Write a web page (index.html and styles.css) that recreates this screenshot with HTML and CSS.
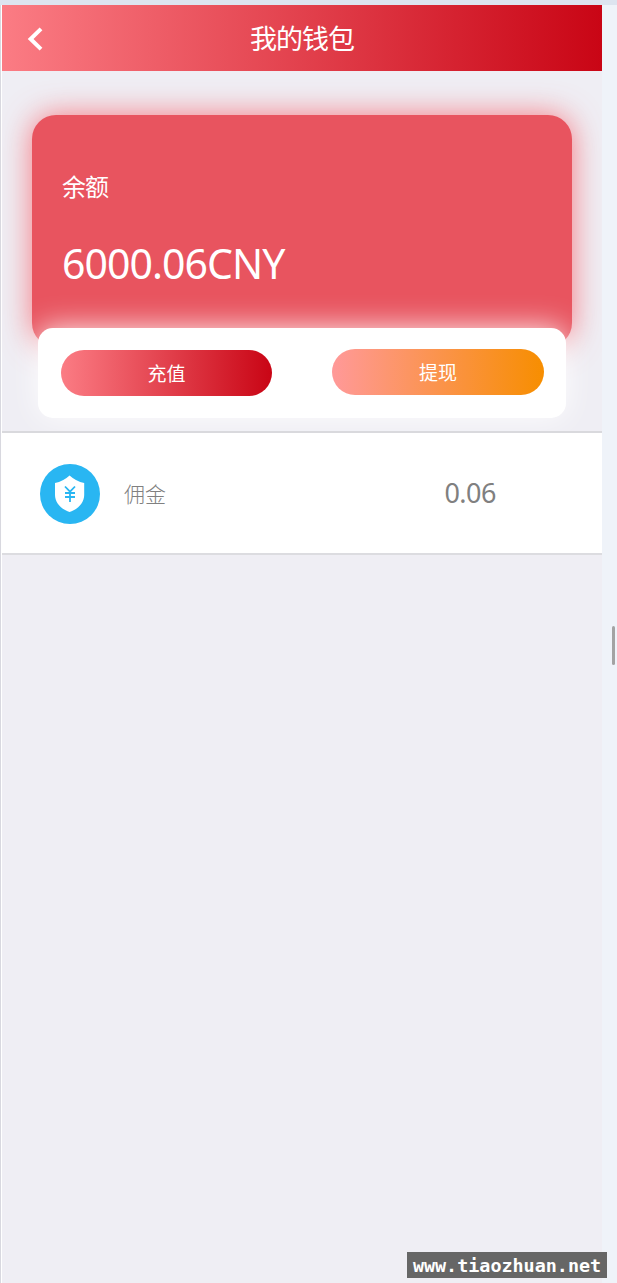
FILE: index.html
```
<!DOCTYPE html>
<html lang="zh-CN">
<head>
  <meta charset="UTF-8">
  <meta name="viewport" content="width=device-width, initial-scale=1.0">
  <title>我的钱包</title>
  <link rel="stylesheet" href="styles.css">
</head>
<body>
  <div class="page">
    <header class="header">
      <a class="back" href="#" aria-label="返回">
        <svg width="18" height="24" viewBox="0 0 18 24">
          <path d="M15 1.9 L4.6 12 L15 22.1" fill="none" stroke="#fff" stroke-width="4"/>
        </svg>
      </a>
      <h1>我的钱包</h1>
    </header>

    <section class="balance">
      <div class="balance-label">余额</div>
      <div class="balance-amount">6000.06CNY</div>
    </section>

    <div class="actions">
      <a class="btn btn-recharge" href="#">充值</a>
      <a class="btn btn-withdraw" href="#">提现</a>
    </div>

    <div class="list-item">
      <svg class="item-icon" width="60" height="60" viewBox="0 0 60 60">
        <circle cx="30" cy="30" r="30" fill="#29b6f2"/>
        <path d="M29.6 11.6 Q36 17.5 44.2 19 V31 C44.2 39 37.5 45.5 29.6 48 C21.7 45.5 15 39 15 31 V19 Q23.2 17.5 29.6 11.6 Z" fill="#fff"/>
        <path d="M25 22.5 L30 27.7 L35 22.5 M30 27.5 V38 M25 29 H35 M25 33 H35" fill="none" stroke="#29b6f2" stroke-width="1.8"/>
      </svg>
      <span class="item-name">佣金</span>
      <span class="item-value">0.06</span>
    </div>
  </div>

  <div class="scrollbar"></div>
  <div class="watermark">www.tiaozhuan.net</div>
</body>
</html>
```

FILE: styles.css
```
* {
  box-sizing: border-box;
}
body {
  margin: 0;
  height: 1283px;
  position: relative;
  overflow: hidden;
  background-color: #eff3f9;
  border-top: 5px solid #dde4ef;
  font-family: "Noto Sans", "Noto Sans CJK SC", sans-serif;
}
a {
  text-decoration: none;
  color: #fff;
}
.page {
  width: 602px;
  height: 1278px;
  border-left: 1px solid #d8d8df;
  padding-left: 1px;
  background-color: #efeef4;
  background-clip: padding-box;
  box-shadow: inset 1px 0 0 #fff;
  overflow: hidden;
}
.header {
  position: relative;
  height: 66px;
  display: flex;
  align-items: center;
  justify-content: center;
  background: linear-gradient(to right, #fb7c84, #c90515);
}
.header h1 {
  margin: 0;
  font-family: "Noto Sans CJK SC", sans-serif;
  font-size: 27px;
  font-weight: 400;
  line-height: 66px;
  letter-spacing: -1px;
  color: #fff;
}
.back {
  position: absolute;
  left: 24px;
  top: 22px;
  height: 24px;
}
.back svg {
  display: block;
}
.balance {
  height: 232px;
  margin: 44px 30px 0;
  padding: 53px 30px 0;
  border-radius: 24px;
  background-color: #e8545f;
  box-shadow: 0 0 30px rgba(250, 80, 90, 0.75);
  color: #fff;
}
.balance-label {
  font-family: "Noto Sans CJK SC", sans-serif;
  font-size: 24px;
  line-height: 36px;
  letter-spacing: -1px;
}
.balance-amount {
  margin-top: 29px;
  font-size: 41px;
  line-height: 60px;
  letter-spacing: -0.95px;
}
.actions {
  position: relative;
  height: 90px;
  margin: -19px 36px 0;
  padding: 21px 22px 0 23px;
  display: flex;
  justify-content: space-between;
  border-radius: 15px;
  background-color: #fff;
  box-shadow: 0 0 30px rgba(255, 255, 255, 0.9);
}
.btn {
  height: 46px;
  border-radius: 23px;
  font-family: "Noto Sans CJK SC", sans-serif;
  font-size: 19px;
  line-height: 46px;
  text-align: center;
}
.btn-recharge {
  width: 211px;
  margin-top: 1px;
  background: linear-gradient(to right, #fb7c84, #c90515);
}
.btn-withdraw {
  width: 212px;
  background: linear-gradient(to right, #ff9999, #f78e00);
}
.list-item {
  position: relative;
  height: 124px;
  margin-top: 13px;
  padding: 0 38px;
  display: flex;
  align-items: center;
  border-top: 2px solid #d9d9dd;
  border-bottom: 2px solid #dcdce0;
  background-color: #fff;
  color: #808080;
}
.item-icon {
  margin-top: 2px;
}
.item-name {
  margin-left: 24px;
  font-family: "Noto Sans CJK SC", sans-serif;
  font-size: 21px;
  font-weight: 300;
}
.item-value {
  margin-left: auto;
  margin-right: 68px;
  margin-bottom: 2px;
  font-size: 27px;
  letter-spacing: -0.5px;
}
.scrollbar {
  position: absolute;
  left: 612px;
  top: 621px;
  width: 3px;
  height: 39px;
  border-radius: 2px;
  background-color: #a3a3a3;
}
.watermark {
  position: absolute;
  right: 10px;
  bottom: 5px;
  width: 200px;
  height: 26px;
  background-color: #666;
  color: #fff;
  font-family: "DejaVu Sans Mono", monospace;
  font-size: 18.4px;
  font-weight: bold;
  line-height: 27px;
  text-align: center;
}
```
